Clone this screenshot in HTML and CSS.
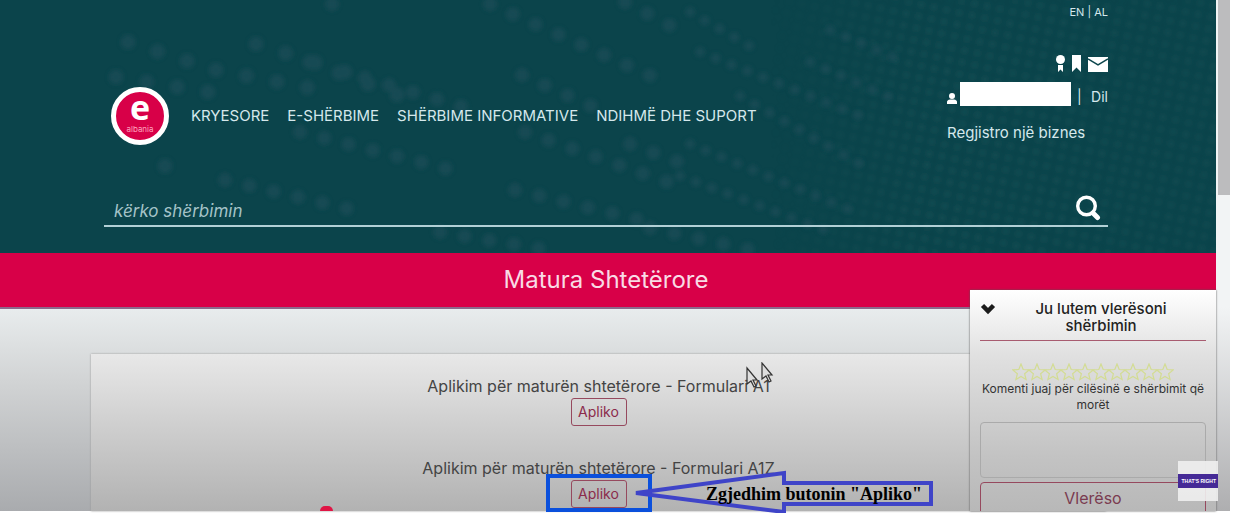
FILE: index.html
```html
<!DOCTYPE html>
<html lang="sq">
<head>
<meta charset="utf-8">
<title>Matura Shtetërore - e-Albania</title>
<link rel="stylesheet" href="styles.css">
</head>
<body>
<div class="shell">
  <div class="page">
    <header class="header">
      <svg class="dots" viewBox="0 0 1216 253" preserveAspectRatio="xMidYMid slice" aria-hidden="true">
        <defs>
          <pattern id="mesh" width="13" height="12" patternUnits="userSpaceOnUse" patternTransform="rotate(12)">
            <circle cx="5" cy="5" r="3" fill="#1a5358"/>
          </pattern>
          <linearGradient id="fade" x1="0" x2="1" y1="0" y2="0">
            <stop offset="0" stop-color="#fff" stop-opacity="0"/>
            <stop offset="0.35" stop-color="#fff" stop-opacity="0.7"/>
            <stop offset="1" stop-color="#fff" stop-opacity="0.5"/>
          </linearGradient>
          <mask id="meshmask"><rect x="770" width="446" height="253" fill="url(#fade)"/></mask>
          <filter id="soft" x="0" y="0" width="100%" height="100%" filterUnits="userSpaceOnUse"><feGaussianBlur stdDeviation="2"/></filter>
        </defs>
        <g mask="url(#meshmask)"><rect x="770" width="446" height="253" fill="url(#mesh)" filter="url(#soft)"/></g>
        <g class="dot-rows" filter="url(#soft)">
          <path stroke-width="15" stroke-dasharray="0 31" d="M128 42L190 62M256 44L345 72M116 77L220 94M216 70L330 92M310 62L400 96M165 166L190 172"/>
          <path stroke-width="14" stroke-dasharray="0 25" d="M332 4L350 8M365 78L480 112M300 132L460 172M225 180L370 214M490 4L660 80M625 2L690 36M522 75L600 110M525 132L690 190M515 190L640 220M630 144L700 170M440 232L560 252M650 228L760 252"/>
          <path stroke-width="10" stroke-dasharray="0 17" d="M690 12L760 52M700 52L870 120M740 96L870 170M690 144L850 210M680 176L830 232M830 30L900 60M810 62L900 102"/>
        </g>
      </svg>
      <div class="header-inner">
        <div class="langs"><a href="#">EN</a> | <a href="#">AL</a></div>
        <div class="masthead">
          <a class="logo" href="#" aria-label="e-albania">
            <span class="logo-e">e</span>
            <span class="logo-name">albania</span>
          </a>
          <nav class="nav">
            <a href="#">KRYESORE</a>
            <a href="#">E-SHËRBIME</a>
            <a href="#">SHËRBIME INFORMATIVE</a>
            <a href="#">NDIHMË DHE SUPORT</a>
          </nav>
          <div class="account">
            <div class="tools">
              <svg width="9" height="17" viewBox="0 0 9 17" fill="#fff"><circle cx="4.500" cy="4.500" r="4.500"/><path d="M2 10h5v7l-2.500-2.500L2 17z"/></svg>
              <svg width="9" height="17" viewBox="0 0 9 17" fill="#fff"><path d="M0 0h9v17l-4.500-4.500L0 17z"/></svg>
              <svg width="20" height="17" viewBox="0 0 20 17"><rect y="2" width="20" height="15" fill="#fff"/><path d="M0 4l10 6 10-6" fill="none" stroke="#0c454c" stroke-width="1.500"/></svg>
            </div>
            <div class="user">
              <svg width="10" height="24" viewBox="0 0 10 24" fill="#fff"><circle cx="5" cy="14" r="3"/><path d="M0 22v-2q0-2 3-2.500h4q3 .5 3 2.500v2z"/></svg>
              <span class="user-name"></span>
              <span class="bar">|</span>
              <a href="#">Dil</a>
            </div>
            <a class="register" href="#">Regjistro një biznes</a>
          </div>
        </div>
        <form class="search">
          <input class="search-input" type="text" placeholder="kërko shërbimin" aria-label="kërko shërbimin">
          <button class="search-button" type="button" aria-label="Kërko">
            <svg width="26" height="26" viewBox="0 0 26 26" fill="none" stroke="#fff"><circle cx="11.500" cy="11" r="8.800" stroke-width="3.400"/><path d="M18 18l4.500 4.500" stroke-width="5" stroke-linecap="round"/></svg>
          </button>
        </form>
      </div>
    </header>
    <h1 class="band">Matura Shtetërore</h1>
    <main class="main">
      <section class="card">
        <div class="item">
          <p class="item-title">Aplikim për maturën shtetërore - Formulari A1</p>
          <button class="apply" type="button">Apliko</button>
          <svg class="cursors" width="30" height="27" viewBox="0 0 30 27" fill="#ddd" stroke="#333" stroke-width="1.200">
            <path fill-opacity="0.4" d="M2 6v16l4-3 3 6 2-1-3-6h4z"/><path d="M17 1v16l4-3 3 6 2-1-3-6h4z"/>
          </svg>
        </div>
        <div class="item">
          <p class="item-title">Aplikim për maturën shtetërore - Formulari A1Z</p>
          <div class="pointed">
            <button class="apply" type="button">Apliko</button>
            <svg class="callout" width="390" height="46" viewBox="0 0 390 46">
              <rect x="3" y="8" width="102" height="34" fill="none" stroke="#0b50dc" stroke-width="4"/>
              <path d="M91 25L239 5V15H386V36H239V44Z" fill="none" stroke="#3f44c8" stroke-width="4"/>
              <text class="callout-text" x="161" y="32">Zgjedhim butonin "Apliko"</text>
            </svg>
          </div>
        </div>
      </section>
      <aside class="rating">
        <div class="rating-head">
          <button class="collapse" type="button" aria-label="Mbyll">
            <svg width="16" height="12" viewBox="0 0 16 12"><path d="M2.500 2.500L8 8l5.500-5.500" fill="none" stroke="#1c1c1c" stroke-width="4.500"/></svg>
          </button>
          <h2 class="rating-title">Ju lutem vlerësoni shërbimin</h2>
        </div>
        <svg class="stars" width="162" height="18" viewBox="0 0 162 18" fill="none" stroke="#d3dc94" stroke-width="1.200" role="img" aria-label="Yje">
          <defs><path id="star" d="M9 1l2.200 5.500 6 .4-4.600 3.800 1.500 5.800L9 13.400l-5.100 3.100 1.500-5.800L.8 6.900l6-.4z"/></defs>
          <use href="#star"/><use href="#star" x="16"/><use href="#star" x="32"/><use href="#star" x="48"/><use href="#star" x="64"/><use href="#star" x="80"/><use href="#star" x="96"/><use href="#star" x="112"/><use href="#star" x="128"/><use href="#star" x="144"/>
        </svg>
        <label class="comment-label" for="comment">Komenti juaj për cilësinë e shërbimit që morët</label>
        <textarea class="comment" id="comment"></textarea>
        <button class="rate" type="button">Vlerëso</button>
      </aside>
      <span class="marker"></span>
    </main>
  </div>
  <div class="scrollbar"><div class="thumb"></div></div>
  <div class="watermark"><span>THAT'S RIGHT</span></div>
</div>
</body>
</html>
```
FILE: styles.css
```css
* { box-sizing: border-box; }
body { margin: 0; background: #fff; font-family: Inter, "Open Sans", sans-serif; color: #444; }
a { color: inherit; text-decoration: none; }
p, h1, h2 { margin: 0; font-weight: 400; }
button, input, textarea { font: inherit; }
svg { display: block; }

.shell { position: relative; display: flex; height: 100vh; padding: 0 22px 2px 0; overflow: hidden; }
.page { flex: 1; display: flex; flex-direction: column; }

.header { position: relative; background: #0b444b; color: #d5e8ec; padding: 4px 108px 26px 104px; }
.dots { position: absolute; inset: 0; width: 100%; height: 100%; }
.dot-rows { fill: none; stroke: #1d4d58; stroke-linecap: round; opacity: 0.7; }
.header-inner { position: relative; }
.langs { text-align: right; font-size: 11px; line-height: 16px; }
.masthead { display: flex; align-items: flex-end; margin-top: 35px; padding-left: 7px; }
.logo { display: flex; flex-direction: column; align-items: center; width: 58px; height: 58px; border: 5px solid #fff; border-radius: 50%; background: #d80048; color: #fff; }
.logo-e { font: bold 34px/30px "Open Sans", sans-serif; }
.logo-name { font-size: 8px; line-height: 14px; color: #ffa3bd; }
.nav { display: flex; gap: 18px; padding: 0 0 19px 22px; font-size: 15px; line-height: 20px; white-space: nowrap; }
.account { display: flex; flex-direction: column; margin-left: auto; width: 161px; font-size: 15px; line-height: 20px; }
.tools { display: flex; justify-content: flex-end; gap: 7px; }
.user { display: flex; align-items: center; height: 24px; margin-top: 10px; font-size: 14px; }
.user-name { width: 111px; height: 24px; margin-left: 3px; background: #fff; }
.bar { margin-left: 6px; padding-top: 6px; }
.user a { margin-left: auto; padding-top: 6px; }
.register { margin-top: 17px; padding-bottom: 2px; white-space: nowrap; }
.search { display: flex; align-items: center; height: 34px; margin-top: 48px; border-bottom: 2px solid #b2d0d6; }
.search-input { flex: 1; padding: 3px 10px 0; border: 0; background: none; color: #fff; font-size: 17px; font-style: italic; outline: 0; }
.search-input::placeholder { color: #a5c3c8; opacity: 1; }
.search-button { padding: 0 0 2px; margin-right: 7px; border: 0; background: none; }

.band { background: #d80048; border-bottom: 2px solid #8b6a8c; color: #f9dbe5; font-size: 24px; line-height: 54px; text-align: center; padding-right: 4px; }

.main { position: relative; flex: 1; display: flex; min-height: 0; padding: 45px 110px 0 91px; background: linear-gradient(#e8eced, #d2d4d5 35%, #a9abae); }
.card { flex: 1; padding-top: 22px; background: linear-gradient(#e8e8e8, #cfcfcf 45%, #b2b2b2); box-shadow: 0 0 2px #999; }
.item { position: relative; display: flex; flex-direction: column; align-items: center; gap: 2px; margin-bottom: 32px; }
.item:last-child { margin-bottom: 0; }
.item-title { font-size: 16px; line-height: 20px; white-space: nowrap; }
.apply { display: block; width: 56px; height: 28px; padding: 0 0 2px; border: 1px solid #96495e; border-radius: 3px; background: none; color: #8b2b4b; font-size: 14px; }
.cursors { position: absolute; left: 50%; top: -14px; margin-left: 146px; }
.pointed { position: relative; z-index: 1; }
.callout { position: absolute; left: -26px; top: -12px; max-width: none; pointer-events: none; }
.callout-text { font: bold 18px "Liberation Serif", serif; fill: #000; }

.rating { position: absolute; top: -19px; right: 0; bottom: 0; width: 246px; padding: 10px 10px 0; overflow: hidden; background: linear-gradient(#fff, #e0e0e0 30%, #c3c3c3 75%, #b8b8b8); box-shadow: 0 0 2px #555; }
.rating-head { display: flex; align-items: flex-start; padding-bottom: 6px; border-bottom: 1px solid #a85c70; }
.collapse { padding: 3px 0 0; border: 0; background: none; }
.rating-title { flex: 1; padding: 0 24px 0 14px; color: #222; font-size: 15px; line-height: 17px; font-weight: 500; text-align: center; margin-left: 10px; }
.stars { margin: 22px auto 0; }
.comment-label { display: block; font-size: 12px; line-height: 16px; text-align: center; color: #333; }
.comment { display: block; width: 100%; height: 56px; margin: 9px 0 4px; border: 1px solid #aaa; border-radius: 4px; background: none; resize: none; }
.rate { display: block; width: 100%; height: 34px; padding: 0 0 2px; border: 1px solid #96495e; border-radius: 4px; background: none; color: #7a3b50; font-size: 16px; }
.marker { position: absolute; left: 320px; bottom: 0; width: 13px; height: 5px; border-radius: 7px 7px 0 0; background: #e01545; }

.scrollbar { width: 14px; padding-left: 2px; background: linear-gradient(#f2f4f5 60%, #aeaeb0); }
.thumb { height: 195px; background: #bcbcbe; }
.watermark { position: absolute; right: 34px; bottom: 12px; width: 40px; height: 40px; padding-top: 13px; background: rgba(240, 240, 240, 0.9); }
.watermark span { display: block; padding-right: 2px; background: #452a96; color: #fff; font: bold 5px/14px "Liberation Sans", sans-serif; text-align: right; white-space: nowrap; }
```
